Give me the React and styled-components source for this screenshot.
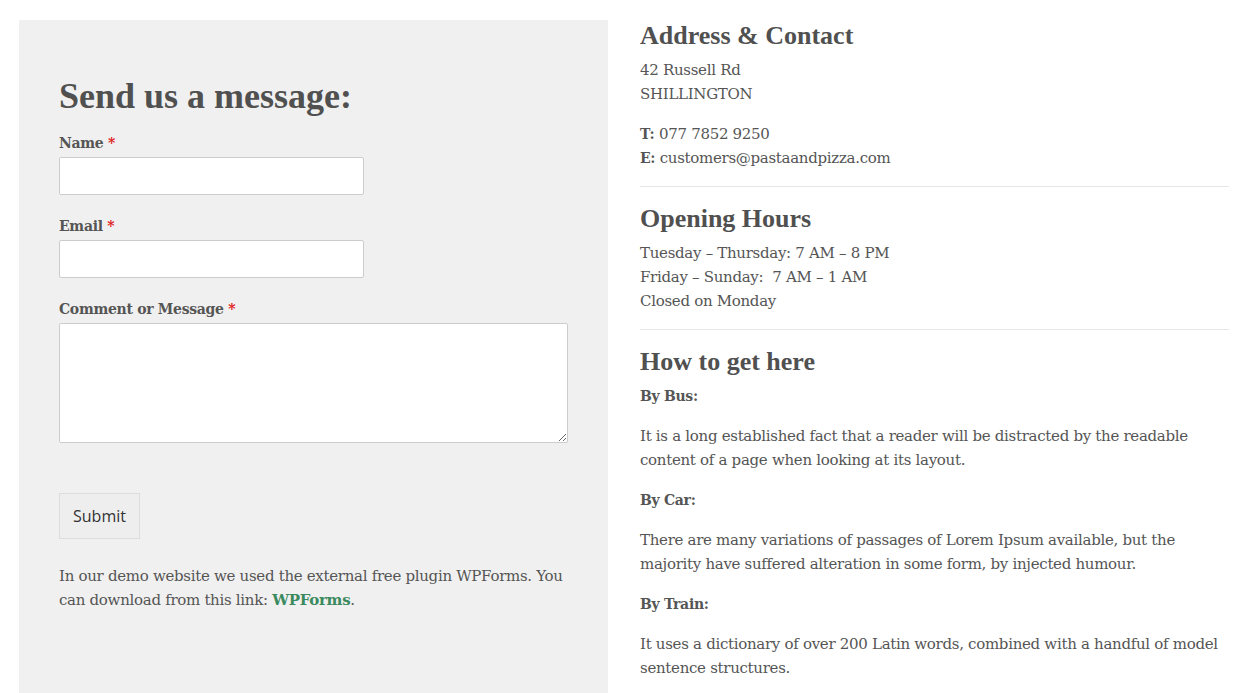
import styled, { createGlobalStyle } from 'styled-components';

const GlobalStyle = createGlobalStyle`
	html, body {
		margin: 0;
		padding: 0;
		background: #ffffff;
	}
	body {
		font-family: 'DejaVu Serif', 'Liberation Serif', serif;
		font-size: 15px;
		letter-spacing: -0.3px;
		color: #555555;
	}
	* {
		box-sizing: border-box;
	}
`;

const HOURS = [
	'Tuesday – Thursday: 7 AM – 8 PM',
	'Friday – Sunday:  7 AM – 1 AM',
	'Closed on Monday',
];

const DIRECTIONS = [
	{
		id: 'bus',
		title: 'By Bus:',
		text: 'It is a long established fact that a reader will be distracted by the readable content of a page when looking at its layout.',
	},
	{
		id: 'car',
		title: 'By Car:',
		text: 'There are many variations of passages of Lorem Ipsum available, but the majority have suffered alteration in some form, by injected humour.',
	},
	{
		id: 'train',
		title: 'By Train:',
		text: 'It uses a dictionary of over 200 Latin words, combined with a handful of model sentence structures.',
	},
];

export default function App() {
	return (
		<>
			<GlobalStyle />
			<Page>
				<FormPanel>
					<FormTitle>Send us a message:</FormTitle>
					<Field>
						<Label>
							Name <Required>*</Required>
						</Label>
						<Input type="text" />
					</Field>
					<Field>
						<Label>
							Email <Required>*</Required>
						</Label>
						<Input type="email" />
					</Field>
					<Field>
						<Label>
							Comment or Message <Required>*</Required>
						</Label>
						<TextArea />
					</Field>
					<SubmitButton type="button">Submit</SubmitButton>
					<Note>
						In our demo website we used the external free plugin
						WPForms. You can download from this link:{' '}
						<GreenLink href="#">WPForms</GreenLink>.
					</Note>
				</FormPanel>

				<InfoColumn>
					<Section>
						<SectionTitle>Address &amp; Contact</SectionTitle>
						<Text>
							42 Russell Rd
							<br />
							SHILLINGTON
						</Text>
						<Text>
							<strong>T:</strong> 077 7852 9250
							<br />
							<strong>E:</strong> customers@pastaandpizza.com
						</Text>
					</Section>
					<Divider />
					<Section>
						<SectionTitle>Opening Hours</SectionTitle>
						<Text>
							{HOURS.map((line, i) => (
								<Line key={i}>{line}</Line>
							))}
						</Text>
					</Section>
					<Divider />
					<Section>
						<SectionTitle>How to get here</SectionTitle>
						{DIRECTIONS.map((d) => (
							<div key={d.id}>
								<Text>
									<strong>{d.title}</strong>
								</Text>
								<Text>{d.text}</Text>
							</div>
						))}
					</Section>
				</InfoColumn>
			</Page>
		</>
	);
}

const Page = styled.div`
	display: grid;
	grid-template-columns: 589px 589px;
	column-gap: 32px;
	padding: 20px 0 0 19px;
	min-height: 693px;
`;

const FormPanel = styled.div`
	background-color: #f0f0f0;
	padding: 57px 40px 40px;
	min-height: 673px;
`;

const FormTitle = styled.h2`
	margin: 0 0 16px;
	font-family: 'Liberation Serif', serif;
	font-size: 36px;
	line-height: 38px;
	font-weight: 700;
	letter-spacing: 0;
	color: #505050;
`;

const Field = styled.div`
	display: flex;
	flex-direction: column;
	align-items: flex-start;
	margin-bottom: 19px;
`;

const Label = styled.label`
	font-weight: 700;
	font-size: 14px;
	line-height: 24px;
	margin-bottom: 2px;
	color: #555555;
`;

const Required = styled.span`
	color: #e02020;
`;

const Input = styled.input`
	width: 305px;
	height: 38px;
	border: 1px solid #cccccc;
	border-radius: 2px;
	background: #ffffff;
	font: inherit;
`;

const TextArea = styled.textarea`
	width: 509px;
	height: 120px;
	border: 1px solid #cccccc;
	border-radius: 2px;
	background: #ffffff;
	font: inherit;
`;

const SubmitButton = styled.button`
	display: block;
	margin-top: 50px;
	width: 81px;
	height: 46px;
	background: #eeeeee;
	border: 1px solid #dddddd;
	border-radius: 0;
	font-family: 'Open Sans', 'DejaVu Sans', sans-serif;
	font-size: 16px;
	letter-spacing: 0;
	color: #333333;
	padding: 0;
`;

const Note = styled.p`
	margin: 25px 0 0;
	line-height: 24px;
`;

const GreenLink = styled.a`
	color: #3a8a5e;
	font-weight: 700;
	text-decoration: none;
`;

const InfoColumn = styled.div`
	display: flex;
	flex-direction: column;
`;

const Section = styled.section`
	display: flex;
	flex-direction: column;
`;

const SectionTitle = styled.h3`
	margin: 0 0 6px;
	font-family: 'Liberation Serif', serif;
	font-size: 26px;
	line-height: 32px;
	font-weight: 700;
	letter-spacing: 0;
	color: #505050;
`;

const Text = styled.p`
	margin: 0 0 16px;
	line-height: 24px;

	strong {
		font-weight: 700;
		font-size: 14px;
	}
`;

const Line = styled.span`
	display: block;
	white-space: pre;
`;

const Divider = styled.hr`
	width: 100%;
	margin: 0 0 16px;
	border: 0;
	border-top: 1px solid #e6e6e6;
`;
